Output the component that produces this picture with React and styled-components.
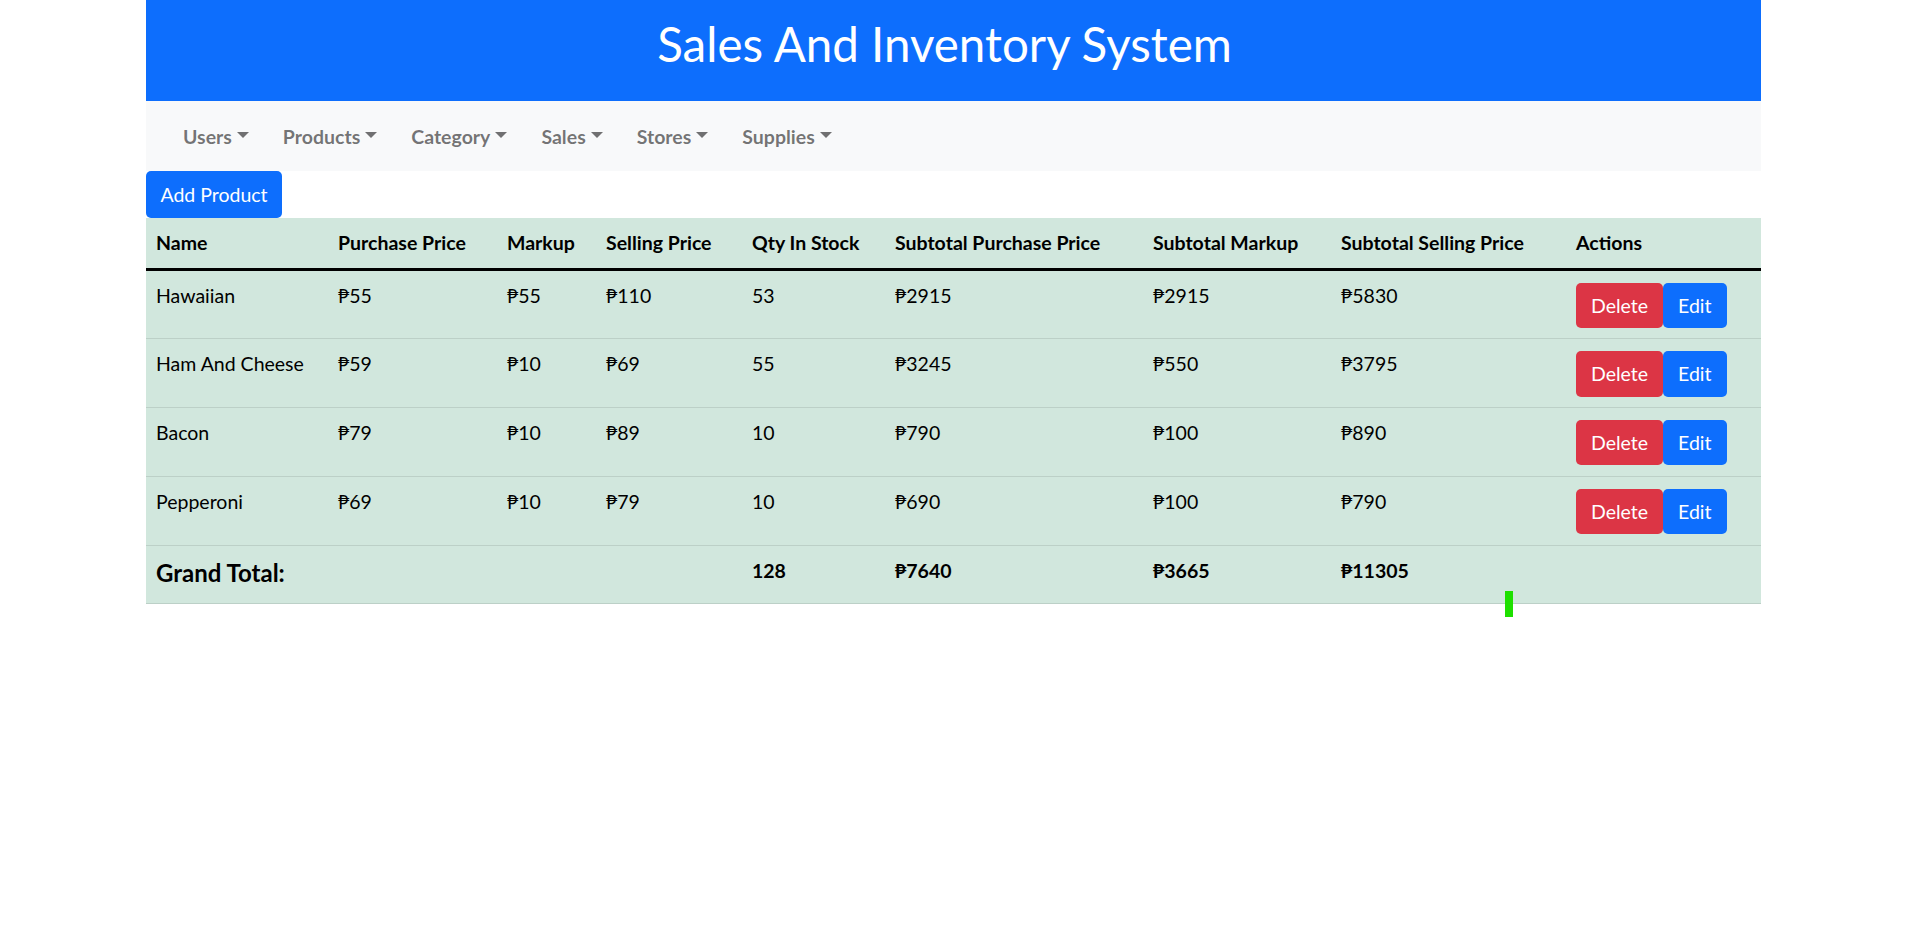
import styled, { createGlobalStyle } from 'styled-components'

const GlobalStyle = createGlobalStyle`
  body {
    margin: 0;
    background: #fff;
    font-family: Lato, "Liberation Sans", sans-serif;
    color: #212529;
  }
`

const Page = styled.div`
  position: relative;
  width: 1615px;
  margin-left: 146px;
  padding-bottom: 24px;
`

const Header = styled.header`
  height: 101px;
  background: #0d6efd;
  display: flex;
  align-items: center;
  justify-content: center;
  padding-bottom: 14px;
  box-sizing: border-box;
`

const Title = styled.h1`
  margin: 0 18px 0 0;
  font-size: 47.5px;
  font-weight: 400;
  color: #fff;
  line-height: 1.2;
`

const NavBar = styled.nav`
  height: 70px;
  background: #f8f9fa;
  display: flex;
  align-items: center;
  padding-left: 20px;
`

const NavLink = styled.a`
  display: flex;
  align-items: center;
  padding: 0 17px;
  font-size: 19.5px;
  font-weight: 700;
  color: rgba(0, 0, 0, 0.55);
  cursor: pointer;

  &::after {
    content: '';
    margin-left: 5px;
    margin-top: -3px;
    border-top: 6px solid;
    border-left: 6px solid transparent;
    border-right: 6px solid transparent;
  }
`

const Button = styled.button`
  font-family: inherit;
  font-size: 19.5px;
  line-height: 1.5;
  color: #fff;
  border: none;
  border-radius: 5px;
  padding: 8px 15px;
  background: ${p => (p.$variant === 'danger' ? '#dc3545' : '#0d6efd')};
  cursor: pointer;
`

const AddButton = styled(Button)`
  display: block;
  height: 47px;
  width: 136px;
  padding: 0;
`

const Table = styled.table`
  width: 100%;
  table-layout: fixed;
  border-collapse: collapse;
  background: #d1e7dd;
  color: #000;
  font-size: 19.5px;
`

const Th = styled.th`
  text-align: left;
  font-weight: 700;
  padding: 10px;
  height: 51px;
  box-sizing: border-box;
  white-space: nowrap;
  border-bottom: 3px solid #000;
`

const Td = styled.td`
  padding: 10px 10px 10.5px;
  vertical-align: top;
  line-height: 1.5;
  border-bottom: 1px solid #bcd0c7;
  font-weight: ${p => (p.$bold ? 700 : 400)};
  white-space: nowrap;
`

const Actions = styled.div`
  display: flex;
  margin-top: 2px;
`

const GrandTotal = styled.h5`
  margin: 3px 0 5px;
  font-size: 24px;
  font-weight: 700;
  line-height: 1.2;
`

const Marker = styled.div`
  position: absolute;
  z-index: 2;
  left: 1359px;
  top: 591px;
  width: 8px;
  height: 26px;
  background: #1ee000;
`

const navItems = ['Users', 'Products', 'Category', 'Sales', 'Stores', 'Supplies']

const columns = [
  ['Name', 182],
  ['Purchase Price', 169],
  ['Markup', 99],
  ['Selling Price', 146],
  ['Qty In Stock', 143],
  ['Subtotal Purchase Price', 258],
  ['Subtotal Markup', 188],
  ['Subtotal Selling Price', 235],
  ['Actions', 195],
]

const products = [
  { name: 'Hawaiian', price: 55, markup: 55, sell: 110, qty: 53 },
  { name: 'Ham And Cheese', price: 59, markup: 10, sell: 69, qty: 55 },
  { name: 'Bacon', price: 79, markup: 10, sell: 89, qty: 10 },
  { name: 'Pepperoni', price: 69, markup: 10, sell: 79, qty: 10 },
]

const peso = n => '\u20B1' + n

export default function App() {
  const totals = products.reduce(
    (acc, p) => ({
      qty: acc.qty + p.qty,
      price: acc.price + p.price * p.qty,
      markup: acc.markup + p.markup * p.qty,
      sell: acc.sell + p.sell * p.qty,
    }),
    { qty: 0, price: 0, markup: 0, sell: 0 }
  )

  return (
    <>
      <GlobalStyle />
      <Page>
        <Header>
          <Title>Sales And Inventory System</Title>
        </Header>
        <NavBar>
          {navItems.map(label => (
            <NavLink key={label}>{label}</NavLink>
          ))}
        </NavBar>
        <AddButton>Add Product</AddButton>
        <Table>
          <colgroup>
            {columns.map(([label, w]) => (
              <col key={label} style={{ width: w }} />
            ))}
          </colgroup>
          <thead>
            <tr>
              {columns.map(([label]) => (
                <Th key={label}>{label}</Th>
              ))}
            </tr>
          </thead>
          <tbody>
            {products.map(p => (
              <tr key={p.name}>
                <Td>{p.name}</Td>
                <Td>{peso(p.price)}</Td>
                <Td>{peso(p.markup)}</Td>
                <Td>{peso(p.sell)}</Td>
                <Td>{p.qty}</Td>
                <Td>{peso(p.price * p.qty)}</Td>
                <Td>{peso(p.markup * p.qty)}</Td>
                <Td>{peso(p.sell * p.qty)}</Td>
                <Td>
                  <Actions>
                    <Button $variant="danger">Delete</Button>
                    <Button>Edit</Button>
                  </Actions>
                </Td>
              </tr>
            ))}
            <tr>
              <Td colSpan={4}>
                <GrandTotal>Grand Total:</GrandTotal>
              </Td>
              <Td $bold>{totals.qty}</Td>
              <Td $bold>{peso(totals.price)}</Td>
              <Td $bold>{peso(totals.markup)}</Td>
              <Td $bold>{peso(totals.sell)}</Td>
              <Td />
            </tr>
          </tbody>
        </Table>
        <Marker />
      </Page>
    </>
  )
}
